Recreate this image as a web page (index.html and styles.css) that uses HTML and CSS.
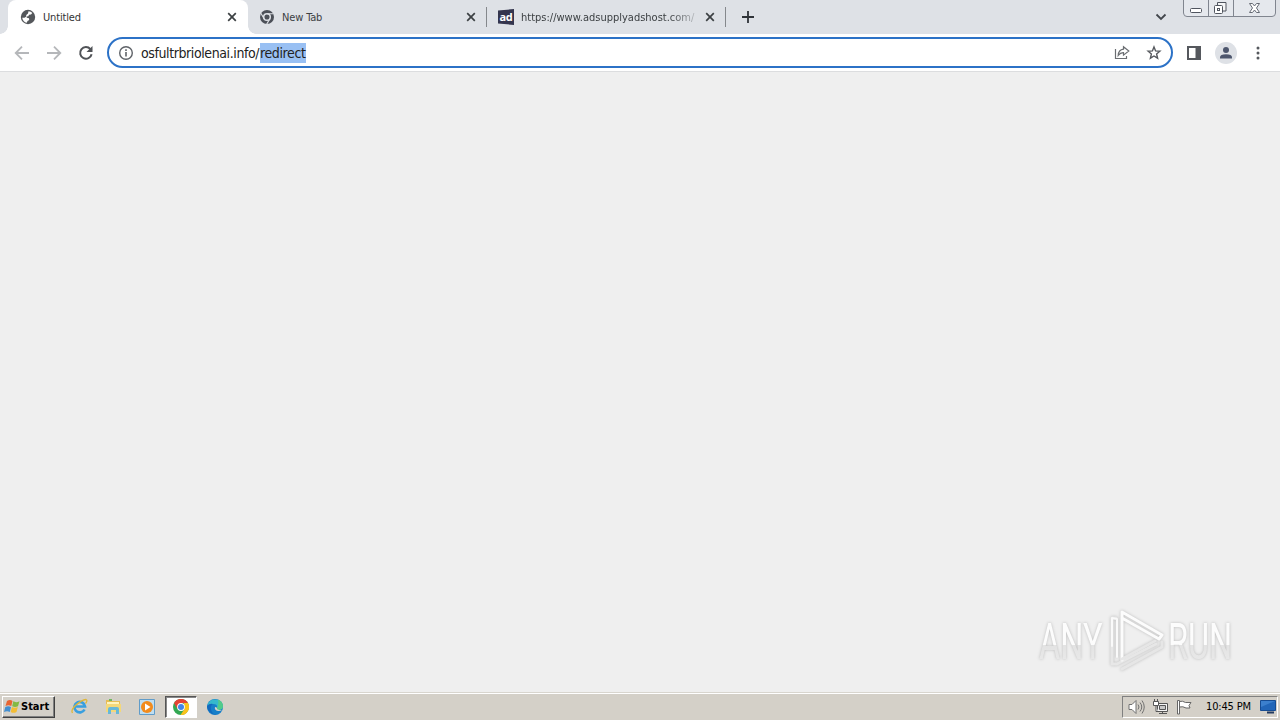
FILE: index.html
```html
<!DOCTYPE html>
<html lang="en">
<head>
<meta charset="utf-8">
<title>Untitled</title>
<link rel="stylesheet" href="styles.css">
</head>
<body>
<div class="screen">
  <header class="tabstrip">
    <div class="tab active">
      <svg class="favicon" width="16" height="16" viewBox="0 0 16 16"><circle cx="8" cy="8" r="7.200" fill="#54575b"/><path d="M8.500 2.300Q11 2.500 12.300 4L11 5.500 9 5.700 8.300 7.300 6.500 7.600 6.800 8.800 9 9.300 9.200 11 7.500 12 6.800 13.800Q2.800 12.800 2.200 8.700L4.500 8.800 6 7.800 6.300 6 8 4.500z" fill="#fff"/></svg>
      <span class="title t-first">Untitled</span>
      <svg class="close" width="10" height="10" viewBox="0 0 10 10"><path d="m1.200 1.200 7.600 7.600m0-7.600-7.600 7.600"/></svg>
    </div>
    <div class="tab second">
      <svg class="favicon" width="16" height="16" viewBox="0 0 16 16"><circle cx="8" cy="8" r="7" fill="#4c5058"/><circle cx="8" cy="8" r="3.300" fill="#4c5058" stroke="#dee1e6" stroke-width="1.500"/><path d="M8 4.700h6.500M5.100 9.700 1.900 4.200M10.900 9.700 7.700 15.100" stroke="#dee1e6" stroke-width="1.100"/></svg>
      <span class="title t-new">New Tab</span>
      <svg class="close" width="10" height="10" viewBox="0 0 10 10"><path d="m1.200 1.200 7.600 7.600m0-7.600-7.600 7.600"/></svg>
    </div>
    <div class="tab third">
      <span class="ad-icon">ad</span>
      <span class="title t-url">https://www.adsupplyadshost.com/</span>
      <svg class="close" width="10" height="10" viewBox="0 0 10 10"><path d="m1.200 1.200 7.600 7.600m0-7.600-7.600 7.600"/></svg>
    </div>
    <svg class="plus" width="12" height="12" viewBox="0 0 12 12"><path d="M6 0v12M0 6h12"/></svg>
    <svg class="chevron" width="12" height="8" viewBox="0 0 12 8"><path d="m1.500 1.500 4.500 4.500 4.500-4.500"/></svg>
    <div class="controls">
      <svg width="97" height="17" viewBox="0 0 97 17" fill="none"><path d="M.5 0v13q0 3.500 3.500 3.500h85q3.500 0 3.500-3.500V0M25.500 0v16M50.500 0v16" stroke="#80858f"/><rect x="7.500" y="8.500" width="11" height="4" rx="1" fill="#fff" stroke="#50555f"/><path d="M34.500 2.500h8.500v8.500h-3M34.500 2.500v3" stroke="#50555f" fill="#f5f6f7"/><rect x="31.500" y="5.500" width="8" height="8" rx="1" fill="#fff" stroke="#50555f"/><rect x="34.500" y="8.500" width="2" height="2" stroke="#50555f"/><path d="M66.500 3.500h3l2 2.500 2-2.500h3l-3 4.500 3 4.500h-3l-2-2.500-2 2.500h-3l3-4.500z" fill="#fff" stroke="#666b75"/></svg>
    </div>
  </header>
  <div class="toolbar">
    <svg class="nav" width="16" height="16" viewBox="0 0 16 16"><path d="M15 8H2M8 1.700 1.700 8 8 14.300" stroke="#b5b7ba"/></svg>
    <svg class="nav" width="16" height="16" viewBox="0 0 16 16"><path d="M1 8h13M8 1.700 14.300 8 8 14.300" stroke="#b5b7ba"/></svg>
    <svg class="nav" width="16" height="16" viewBox="0 0 16 16"><path d="M13.600 9.200A5.800 5.800 0 1 1 12.400 4.200L13.500 5.500" stroke="#505357" stroke-width="2"/><path d="M14.500 1v6h-6z" fill="#505357"/></svg>
    <div class="omnibox">
      <svg width="16" height="16" viewBox="0 0 16 16"><circle cx="8" cy="8" r="6.300" fill="none" stroke="#5f6368" stroke-width="1.400"/><path d="M8 7v4.500M8 4.300v1.600" stroke="#5f6368" stroke-width="1.600"/></svg>
      <span class="address"><span class="host">osfultrbriolenai.info/</span><span class="selected">redirect</span></span>
      <svg class="share" width="16" height="16" viewBox="0 0 16 16" fill="none" stroke="#6a6d71" stroke-width="1.200"><path d="M1.500 4v9.500h11v-2.500M9.500 1.800 14.800 6 9.500 10.100V7.700Q6.400 7.500 4.200 10.500 4.500 4.700 9.500 4.200z"/></svg>
      <svg class="star" width="16" height="16" viewBox="0 0 16 16"><path d="m8 1.900 1.600 4 4.300.3-3.300 2.800 1 4.200L8 11l-3.600 2.200 1-4.200-3.300-2.800 4.300-.3z" fill="none" stroke="#55585d" stroke-width="1.400"/></svg>
    </div>
    <svg class="panel" width="14" height="14" viewBox="0 0 14 14"><path d="M1 1h12v12H1z" fill="#fff" stroke="#55585d" stroke-width="2"/><path d="M8.500 1H14v12H8.500z" fill="#55585d"/></svg>
    <svg class="avatar" width="22" height="22" viewBox="0 0 22 22"><circle cx="11" cy="11" r="11" fill="#dee1e6"/><circle cx="11" cy="8" r="3" fill="#4d566d"/><path d="M5 16.500v-1.300Q5 12.300 11 12.300t6 2.900v1.300z" fill="#4d566d"/></svg>
    <svg class="dots" width="4" height="14" viewBox="0 0 4 14" fill="#55585d"><circle cx="2" cy="2" r="1.500"/><circle cx="2" cy="7" r="1.500"/><circle cx="2" cy="12" r="1.500"/></svg>
  </div>
  <main class="page">
    <svg class="watermark" width="210" height="80" viewBox="0 0 210 80">
      <defs><linearGradient id="fade" x1="0" y1="0" x2="0" y2="1"><stop offset=".55" stop-color="#fcfcfc"/><stop offset=".56" stop-color="#e3e3e3"/><stop offset="1" stop-color="#ededed"/></linearGradient></defs>
      <g class="letters" fill="url(#fade)">
        <text transform="translate(9 59) scale(.65 1)">ANY</text>
        <text transform="translate(138 59) scale(.65 1)">RUN</text>
      </g>
      <g class="mark" fill="none" stroke-linejoin="round" stroke-linecap="round">
        <path d="M86 18 82 18V64L87 64 126 44" stroke="#e7e7e7" stroke-width="3"/>
        <path d="M82 46V18l5 1v38" stroke="#fafafa" stroke-width="2"/>
        <path d="M92 60V12L132 35 129 39 92 18" stroke="#fcfcfc" stroke-width="3"/>
        <path d="M92 59 125 41M92 69 132 47V42" stroke="#e6e6e6" stroke-width="3"/>
      </g>
    </svg>
  </main>
  <footer class="taskbar">
    <button class="start"><svg width="17" height="17" viewBox="0 0 17 17"><path d="M3 3Q6 1 8.500 3L7.300 8Q4.500 6.500 1.500 8z" fill="#e86532"/><path d="M9.300 3.300Q12 5 15.500 3.200L14 8.200q-3 1.500-5.800 0z" fill="#83b944"/><path d="M1.300 8.900q3-1.500 5.700 0l-1.200 5Q3 12.500 0 14z" fill="#438fd0"/><path d="M7.900 9.100q3 1.500 5.900 0L12.500 14q-3 1.700-5.800 0z" fill="#f3bd35"/></svg><span>Start</span></button>
    <div class="launch ie"><svg width="17" height="17" viewBox="0 0 17 17" fill="none"><path d="M13.500 11.500A5.300 5.300 0 1 1 14 8.500H4.500" stroke="#399fdf" stroke-width="2.700"/><path d="M1.500 15Q-.5 12 5 7T15 1.500q2 1-.5 4" stroke="#dfb637" stroke-width="1.300"/></svg></div>
    <div class="launch"><svg width="17" height="17" viewBox="0 0 17 17"><path d="M1 2h5l1 1h8v11H1z" fill="#e7bd55"/><path d="M2 4h12v4H2z" fill="#fff4bd"/><path d="M1 6h15v8H1z" fill="#f4d879"/><path d="M3 16v-5q0-2 2-2h7q2 0 2 2v5h-3v-4H6v4z" fill="#67b8d8"/><path d="M4 1h3v2H4z" fill="#71b85f"/></svg></div>
    <div class="launch"><svg width="16" height="16" viewBox="0 0 16 16"><path d="M.5.500h15v15H.5z" fill="#bfdef1" stroke="#609cc9"/><circle cx="8" cy="8" r="6" fill="#f28b1c"/><path d="m6 4.500 5.500 3.500L6 11.500z" fill="#fff"/></svg></div>
    <div class="launch running"><svg width="16" height="16" viewBox="0 0 16 16"><circle cx="8" cy="8" r="8" fill="#33a853"/><path d="M1 4A8 8 0 0 1 15 4H8L4.500 10z" fill="#e54335"/><path d="M15 4A8 8 0 0 1 7.500 16L11.500 10 11 4z" fill="#fbc21b"/><circle cx="8" cy="8" r="3.900" fill="#fff"/><circle cx="8" cy="8" r="3" fill="#4285e8"/></svg></div>
    <div class="launch"><svg width="16" height="16" viewBox="0 0 16 16"><circle cx="8" cy="8" r="8" fill="#167fc9"/><path d="M.4 6.500A8 8 0 0 1 16 7q0 4-5 4-2-.5-1-2 1-4-4-4-3 0-5.600 1.500" fill="#35b9cc"/><path d="M11 .6Q16 3 16 7q0 4-5 4-2-.5-1-2 2-3 1-8.400" fill="#52cb8a"/><path d="M6 5Q2.500 7 4.500 12t8 3Q8 17 4 14T0 7q2.500-3 6-2" fill="#1269bd"/><path d="M8 8q-1 3 3 4 2 .3 4-1-2.500.2-4-.5-1.500-.5-1-1.500-.5-1-2-1" fill="#d4d0c8"/></svg></div>
    <div class="tray">
      <svg width="17" height="16" viewBox="0 0 17 16" fill="none" stroke="#707070"><path d="M1 5.500h3l4-4v13l-4-4H1z" fill="#fff"/><path d="M10 5.500q2 2.500 0 5M12 3.500q3.500 4.500 0 9M14 1.500q4.500 6.500 0 13"/></svg>
      <svg width="17" height="16" viewBox="0 0 17 16" fill="none" stroke="#555"><path d="M5.500 4.500h10v8h-10z" fill="#f4f4f4"/><path d="M7.500 6.500h6v4h-6z" fill="#c8c8c8"/><path d="M7 14.500h8M10.500 12.500v2M2.500 0v3M5.500 0v3"/><path d="M1.500 2.500h5v4h-5zM4 6.500v6h2" fill="#fff"/></svg>
      <svg width="16" height="16" viewBox="0 0 16 16" fill="#fff" stroke="#666"><path d="M1.500 1.500h2V15h-2zM3.500 2.500q3-1 6 1h5.500l-2 3 1 2.500h-4q-3-2-6.500-1z"/></svg>
      <span class="clock">10:45 PM</span>
      <svg class="desktop" width="16" height="14" viewBox="0 0 16 14"><path d="M.5.500h15v10H.5z" fill="#2266b8" stroke="#164c92"/><path d="M1 1h14L1 7z" fill="#3c80cd"/><path d="M7 12.500h7" stroke="#223a60" stroke-width="2"/></svg>
    </div>
  </footer>
</div>
</body>
</html>
```
FILE: styles.css
```css
* { box-sizing: border-box; }
body { margin: 0; font-family: "DejaVu Sans Condensed", "DejaVu Sans", sans-serif; }
svg { display: block; flex: none; }
.screen { width: 1280px; height: 720px; display: flex; flex-direction: column; overflow: hidden; background: #efefef; }
.tabstrip { height: 34px; flex: none; display: flex; align-items: center; background: #dee1e6; padding-left: 8px; }
.tab { height: 34px; display: flex; align-items: center; color: #3c4043; font-size: 11px; }
.active { width: 240px; padding: 0 11px 0 12px; background: #fff; border-radius: 8px 8px 0 0; position: relative; color: #333; }
.active::before, .active::after { content: ""; position: absolute; bottom: 0; width: 8px; height: 8px; }
.active::before { right: 100%; background: radial-gradient(circle at 0 0, transparent 7.500px, #fff 8px); }
.active::after { left: 100%; background: radial-gradient(circle at 100% 0, transparent 7.500px, #fff 8px); }
.second { width: 239px; padding: 0 11px; }
.third { width: 239px; padding: 0 11px; }
.second, .third { background: linear-gradient(#85888c, #85888c) right center / 1px 20px no-repeat; }
.title { margin-left: 7px; padding-top: 1px; white-space: nowrap; line-height: 16px; }
.t-first { letter-spacing: -.15px; }
.t-new { letter-spacing: -.15px; }
.t-url { width: 175px; letter-spacing: 0; -webkit-mask-image: linear-gradient(90deg, #000 148px, transparent 182px); mask-image: linear-gradient(90deg, #000 148px, transparent 182px); }
.close { margin-left: auto; fill: none; stroke: #3c4043; stroke-width: 1.700; }
.ad-icon { width: 16px; height: 16px; flex: none; background: #34354e; color: #fff; clip-path: polygon(0 10%, 100% 0, 100% 100%, 0 90%); font: bold 11px/15px "Open Sans", sans-serif; text-align: center; letter-spacing: -.3px; }
.plus { margin-left: 16px; stroke: #2f3338; stroke-width: 1.800; }
.chevron { margin-left: auto; fill: none; stroke: #42464c; stroke-width: 1.800; }
.controls { width: 97px; margin: 0 0 0 16px; align-self: flex-start; border-radius: 0 0 4px 4px; }
.controls svg { background: linear-gradient(#e5e8ed, #e5e8ed) 0 0 / 92px 16px no-repeat; }
.toolbar { height: 38px; flex: none; display: flex; align-items: center; background: #fff; border-bottom: 1px solid #dcdddf; padding: 0 20px 0 14px; }
.nav { margin-right: 16px; fill: none; stroke-width: 1.800; }
.omnibox { width: 1066px; height: 31px; margin-left: -3px; border: 2px solid #2c72c7; border-radius: 16px; display: flex; align-items: center; padding: 0 9px; }
.address { margin-left: 7px; display: flex; font-size: 14px; line-height: 20px; color: #222; white-space: nowrap; }
.host { width: 119px; letter-spacing: -.4px; }
.selected { width: 46px; background: #99c0f3; letter-spacing: -.38px; }
.share { margin-left: auto; }
.star { margin-left: 16px; }
.panel { margin-left: 14px; }
.avatar { margin-left: 14px; }
.dots { margin-left: auto; }
.page { flex: 1; min-height: 0; display: flex; justify-content: flex-end; align-items: flex-end; padding: 0 40px 12px 0; }
.watermark { overflow: visible; }
.letters { font: 50px "Roboto", sans-serif; filter: drop-shadow(0 0 1.500px #bbb); }
.mark { filter: drop-shadow(0 0 1.500px #bbb); }
.taskbar { height: 28px; flex: none; display: flex; align-items: center; background: #d4d0c8; border-top: 1px solid #d8d5ce; box-shadow: inset 0 1px #fff; padding: 2px 2px 2px 1px; }
.start { width: 53px; height: 22px; margin-left: 1px; padding: 0 1px; display: flex; align-items: center; border: 1px solid; border-color: #fff #404040 #404040 #fff; box-shadow: inset -1px -1px #808080; background: #d4d0c8; font: bold 11px "DejaVu Sans Condensed", sans-serif; color: #000; }
.start span { letter-spacing: 0; }
.launch { width: 32px; height: 22px; margin-right: 2px; display: flex; align-items: center; justify-content: center; }
.ie { margin-left: 8px; }
.running { background: #fff; border: 1px solid; border-color: #555 #fff #fff #555; box-shadow: inset 1px 1px #888; }
.tray { width: 156px; height: 22px; margin-left: auto; display: flex; align-items: center; gap: 7px; padding: 0 1px 0 5px; border: 1px solid; border-color: #808080 #fff #fff #808080; }
.clock { margin-left: 7px; width: 46px; white-space: nowrap; font-size: 11px; letter-spacing: -.15px; color: #000; }
.desktop { margin-left: auto; }
```
